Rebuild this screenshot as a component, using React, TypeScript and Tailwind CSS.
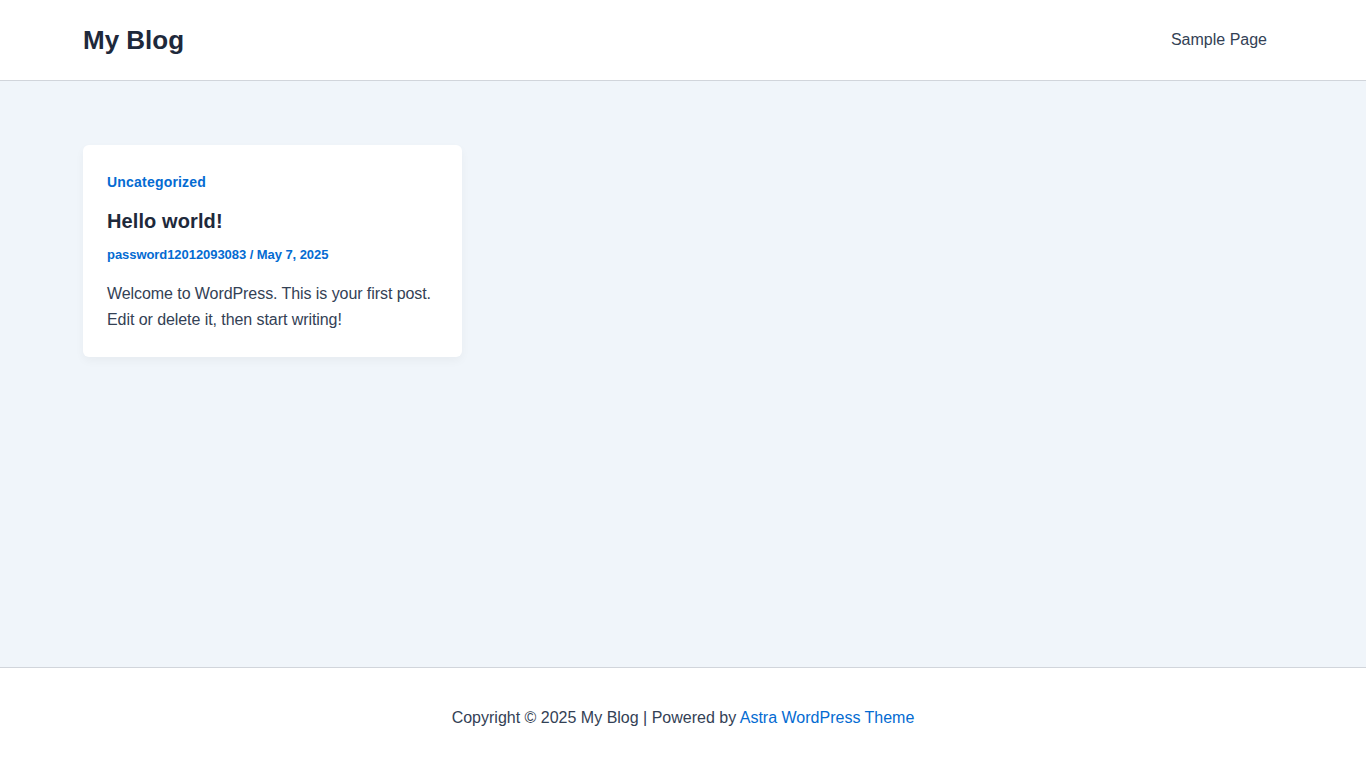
import React from "react";

export default function App() {
  return (
    <div
      className="min-h-screen flex flex-col bg-[#f0f5fa] text-[#334155]"
      style={{ fontFamily: '"Liberation Sans", Arial, sans-serif' }}
    >
      <header className="bg-white border-b border-[#d1d5db] h-[81px]">
        <div className="w-[1200px] mx-auto h-[80px] flex items-center justify-between">
          <div className="text-[26px] font-bold text-[#1e293b] leading-none">My Blog</div>
          <nav className="pr-4 text-[16px] text-[#334155]">Sample Page</nav>
        </div>
      </header>
      <main className="flex-1 pt-16 pb-16">
        <div className="w-[1200px] mx-auto grid grid-cols-3 gap-8">
          <article className="bg-white rounded-md shadow-[0_4px_10px_rgba(0,0,0,0.04)] px-6 pt-6 pb-6">
            <div className="text-[14px] leading-[26px] font-bold text-[#046bd2] tracking-[0.2px]">Uncategorized</div>
            <h2 className="mt-[11px] text-[20px] leading-[30px] font-bold text-[#1e293b] tracking-[0.1px]">Hello world!</h2>
            <div className="mt-[9px] text-[13px] leading-[20px] font-bold text-[#046bd2] tracking-[-0.06px]">
              password12012093083 / May 7, 2025
            </div>
            <p className="mt-4 text-[16px] leading-[26px] text-[#334155] tracking-[-0.07px]">
              Welcome to WordPress. This is your first post. Edit or delete it, then start writing!
            </p>
          </article>
        </div>
      </main>
      <footer className="bg-white border-t border-[#d1d5db] h-[101px] flex items-center justify-center">
        <p className="text-[16px] text-[#334155]">
          Copyright © 2025 My Blog | Powered by <span className="text-[#046bd2]">Astra WordPress Theme</span>
        </p>
      </footer>
    </div>
  );
}
